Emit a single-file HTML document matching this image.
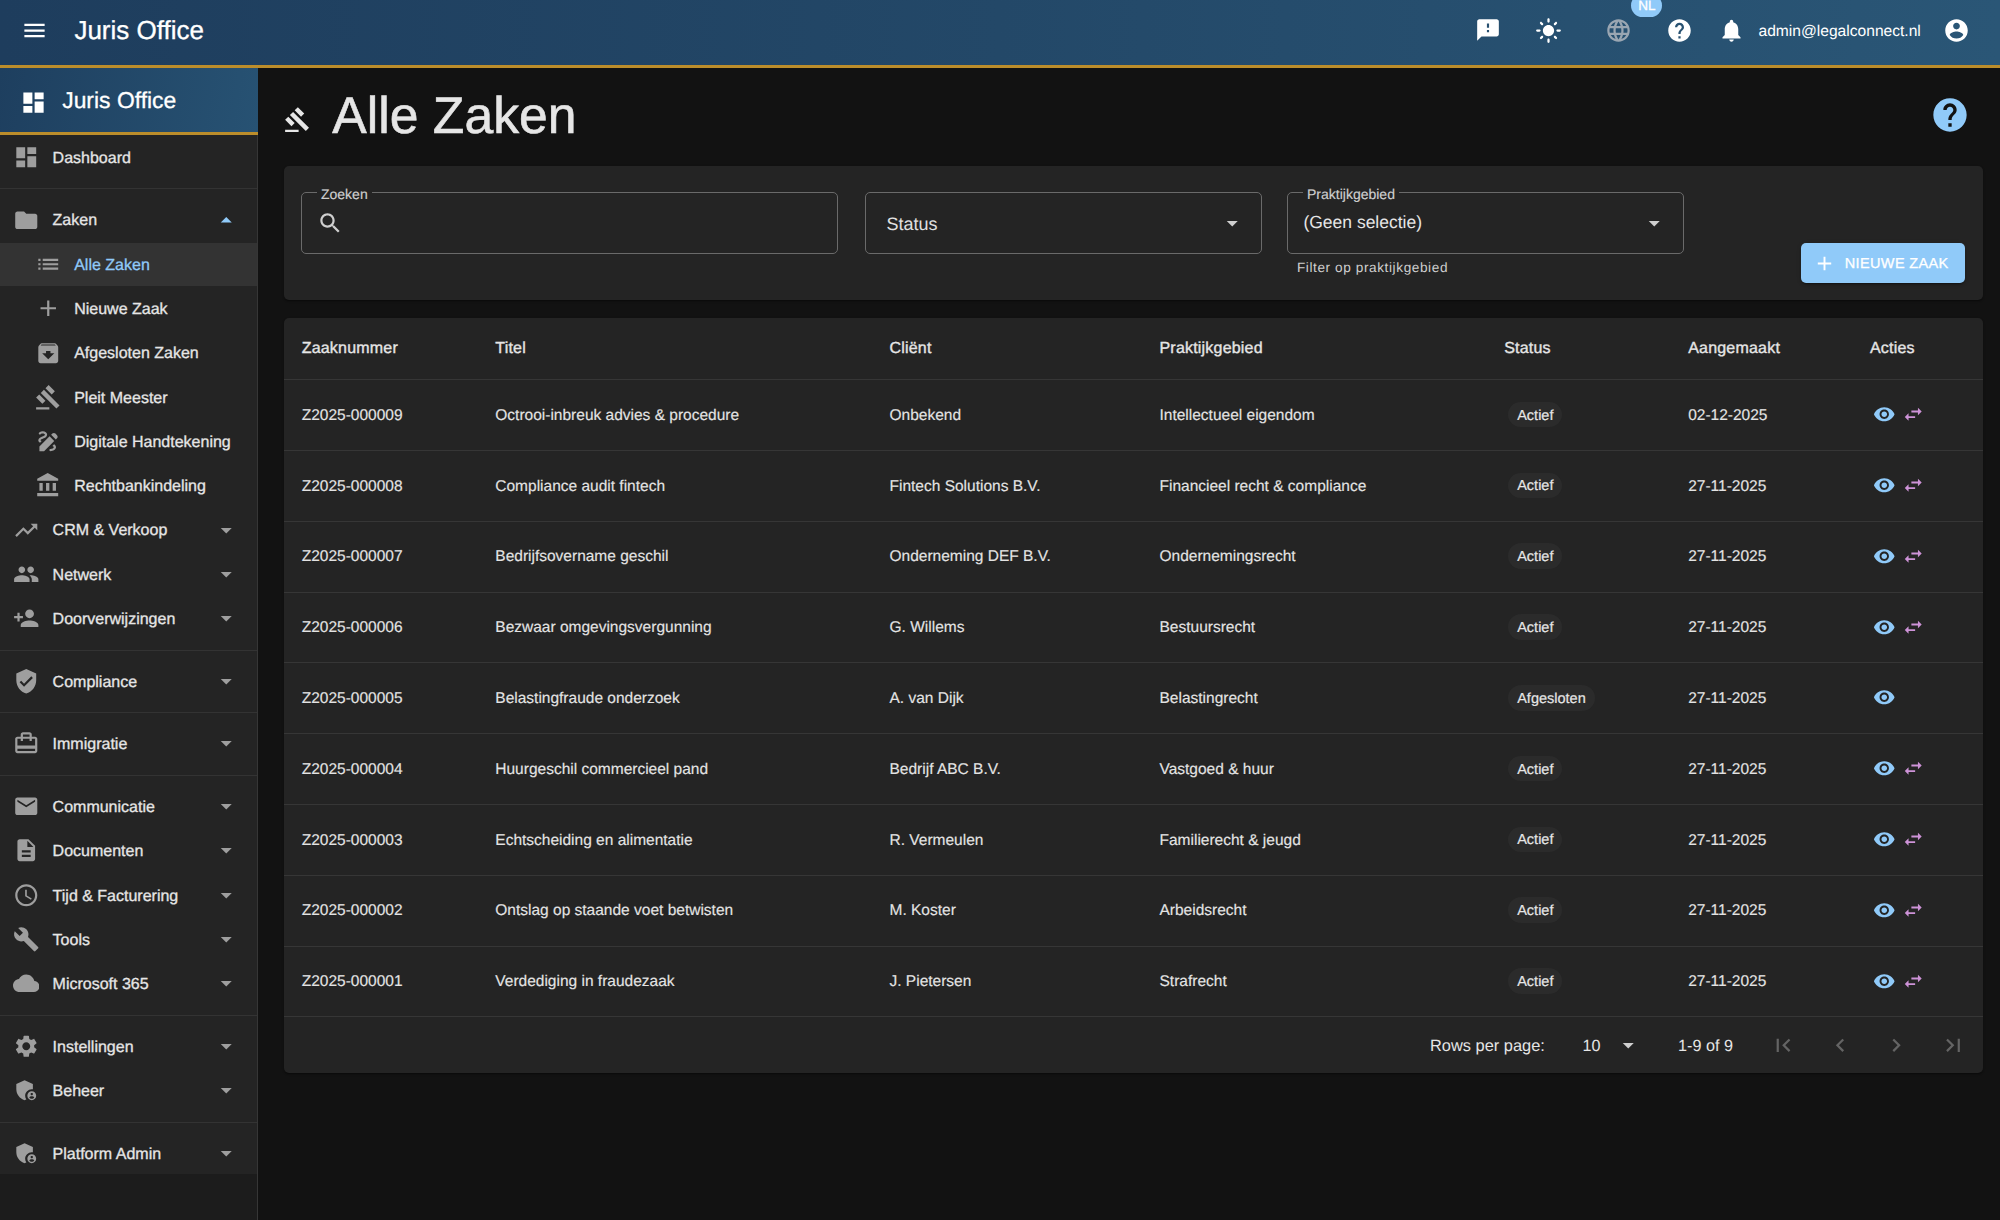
<!DOCTYPE html>
<html><head><meta charset="utf-8">
<style>
*{box-sizing:border-box;margin:0;padding:0}
html,body{width:2000px;height:1220px;overflow:hidden;background:#121212;font-family:"Liberation Sans",sans-serif;color:#e6e6e6;text-rendering:geometricPrecision}
.abs{position:absolute;display:block}
.t{position:absolute;white-space:nowrap;line-height:1.15}
#appbar{position:absolute;left:0;top:0;width:2000px;height:68px;background:linear-gradient(90deg,#1e3d5d 0%,#234868 50%,#2a5676 100%);border-bottom:3px solid #bb8d2b}
#drawer{position:absolute;left:0;top:68px;width:258px;height:1152px;background:#1c1c1c;border-right:1px solid #363636}
#navlist{position:absolute;left:0;top:135px;width:257px;height:1039px;background:#242424}
#dhead{position:absolute;left:0;top:68px;width:258px;height:67px;background:linear-gradient(100deg,#1e3f5f 0%,#275273 100%);border-bottom:3px solid #bb8d2b}
.sel{position:absolute;left:0;top:243px;width:257px;height:43px;background:#333333}
.div{position:absolute;left:0;width:257px;height:1px;background:#333}
.paper{position:absolute;background:#242424;border-radius:5px;box-shadow:0 2px 1px -1px rgba(0,0,0,.2),0 1px 1px 0 rgba(0,0,0,.14),0 1px 3px 0 rgba(0,0,0,.12)}
.fld{position:absolute;border:1px solid #6a6a6a;border-radius:5px}
.lbl{position:absolute;font-size:14px;color:#cfcfcf;background:#242424;padding:0 4px;line-height:14px;white-space:nowrap;-webkit-text-stroke:0.15px #cfcfcf}
.rdiv{position:absolute;left:284px;width:1699px;height:1px;background:#363636}
.chip{position:absolute;height:25.6px;border-radius:13px;background:#2d2d2d;font-size:14.5px;line-height:25.6px;color:#e6e6e6;padding:0 9px;white-space:nowrap}
</style></head>
<body>
<div id="appbar"></div>
<div id="drawer"></div>
<div id="navlist"></div>
<div id="dhead"></div>

<svg class="abs" style="left:20.6px;top:16.5px;width:27px;height:27px" viewBox="0 0 24 24"><path fill="#fff" d="M3 18h18v-2H3v2zm0-5h18v-2H3v2zm0-7v2h18V6H3z"/></svg>
<div class="t" style="left:74.4px;top:16.00px;font-size:26px;color:#fff;font-weight:normal;-webkit-text-stroke:0.3px #fff">Juris Office</div>
<svg class="abs" style="left:1474.5px;top:17px;width:26px;height:26px" viewBox="0 0 24 24"><path fill="#fff" d="M20 2H4c-1.1 0-1.99.9-1.99 2L2 22l4-4h14c1.1 0 2-.9 2-2V4c0-1.1-.9-2-2-2zm-7 12h-2v-2h2v2zm0-4h-2V6h2v4z"/></svg>
<svg class="abs" style="left:1534.5px;top:16.5px;width:27px;height:27px" viewBox="0 0 24 24"><path fill="#fff" d="M12 7c-2.76 0-5 2.24-5 5s2.24 5 5 5 5-2.24 5-5-2.24-5-5-5zM2 13h2c.55 0 1-.45 1-1s-.45-1-1-1H2c-.55 0-1 .45-1 1s.45 1 1 1zm18 0h2c.55 0 1-.45 1-1s-.45-1-1-1h-2c-.55 0-1 .45-1 1s.45 1 1 1zM11 2v2c0 .55.45 1 1 1s1-.45 1-1V2c0-.55-.45-1-1-1s-1 .45-1 1zm0 18v2c0 .55.45 1 1 1s1-.45 1-1v-2c0-.55-.45-1-1-1s-1 .45-1 1zM5.99 4.58c-.39-.39-1.03-.39-1.41 0-.39.39-.39 1.03 0 1.41l1.06 1.06c.39.39 1.03.39 1.410 0s.39-1.03 0-1.41L5.99 4.58zm12.37 12.37c-.39-.39-1.03-.39-1.41 0-.39.39-.39 1.03 0 1.41l1.06 1.06c.39.39 1.03.39 1.41 0 .39-.39.39-1.03 0-1.41l-1.06-1.06zm1.06-10.96c.39-.39.39-1.03 0-1.41-.39-.39-1.03-.39-1.41 0l-1.06 1.06c-.39.39-.39 1.03 0 1.41s1.03.39 1.41 0l1.06-1.06zM7.05 18.36c.39-.39.39-1.03 0-1.41-.39-.39-1.03-.39-1.41 0l-1.06 1.06c-.39.39-.39 1.03 0 1.41s1.03.39 1.41 0l1.06-1.06z"/></svg>
<svg class="abs" style="left:1605px;top:16.5px;width:27px;height:27px" viewBox="0 0 24 24"><path fill="#9aa6b2" d="M11.99 2C6.47 2 2 6.48 2 12s4.47 10 9.99 10C17.52 22 22 17.52 22 12S17.52 2 11.99 2zm6.93 6h-2.95c-.32-1.25-.78-2.45-1.380-3.56 1.84.63 3.37 1.91 4.33 3.56zM12 4.04c.83 1.2 1.48 2.53 1.91 3.96h-3.82c.43-1.43 1.08-2.76 1.91-3.96zM4.26 14C4.1 13.36 4 12.690 4 12s.1-1.36.26-2h3.38c-.08.66-.14 1.32-.14 2 0 .68.06 1.34.14 2H4.26zm.82 2h2.95c.32 1.25.78 2.45 1.38 3.56-1.84-.63-3.37-1.9-4.33-3.56zm2.95-8H5.08c.96-1.66 2.49-2.93 4.33-3.56C8.81 5.55 8.35 6.75 8.03 8zM12 19.96c-.83-1.2-1.48-2.53-1.91-3.96h3.82c-.43 1.43-1.08 2.76-1.91 3.96zM14.34 14H9.66c-.09-.66-.16-1.32-.16-2 0-.68.07-1.35.16-2h4.68c.09.65.16 1.32.16 2 0 .68-.07 1.34-.16 2zm.25 5.56c.6-1.11 1.06-2.31 1.38-3.56h2.95c-.96 1.65-2.49 2.93-4.33 3.56zM16.36 14c.08-.66.14-1.32.14-2 0-.68-.06-1.34-.14-2h3.38c.16.64.26 1.31.26 2s-.1 1.36-.26 2h-3.38z"/></svg>
<div class="abs" style="left:1631px;top:-6px;width:31px;height:23px;border-radius:12px;background:#90caf9"></div>
<div class="t" style="left:1638.3px;top:-2.00px;font-size:13.5px;color:#fff;font-weight:normal;-webkit-text-stroke:0.3px #fff">NL</div>
<svg class="abs" style="left:1665.5px;top:16.5px;width:27px;height:27px" viewBox="0 0 24 24"><path fill="#fff" d="M12 2C6.48 2 2 6.48 2 12s4.48 10 10 10 10-4.48 10-10S17.52 2 12 2zm1 17h-2v-2h2v2zm2.07-7.75l-.9.92C13.45 12.9 13 13.5 13 15h-2v-.5c0-1.1.45-2.1 1.17-2.83l1.24-1.26c.37-.36.59-.86.59-1.41 0-1.1-.9-2-2-2s-2 .9-2 2H8c0-2.21 1.79-4 4-4s4 1.79 4 4c0 .88-.36 1.68-.93 2.25z"/></svg>
<svg class="abs" style="left:1718px;top:16.5px;width:27px;height:27px" viewBox="0 0 24 24"><path fill="#fff" d="M12 22c1.1 0 2-.9 2-2h-4c0 1.1.89 2 2 2zm6-6v-5c0-3.07-1.64-5.64-4.5-6.32V4c0-.83-.67-1.5-1.5-1.5s-1.5.67-1.5 1.5v.68C7.63 5.36 6 7.92 6 11v5l-2 2v1h16v-1l-2-2z"/></svg>
<div class="t" style="left:1758.5px;top:23.00px;font-size:15.6px;color:#fff;font-weight:normal">admin@legalconnect.nl</div>
<svg class="abs" style="left:1942.5px;top:16.5px;width:27px;height:27px" viewBox="0 0 24 24"><path fill="#fff" d="M12 2C6.48 2 2 6.48 2 12s4.48 10 10 10 10-4.48 10-10S17.52 2 12 2zm0 3c1.66 0 3 1.34 3 3s-1.34 3-3 3-3-1.34-3-3 1.34-3 3-3zm0 14.2c-2.5 0-4.71-1.28-6-3.22.03-1.99 4-3.08 6-3.08 1.99 0 5.970 1.09 6 3.08-1.29 1.94-3.5 3.22-6 3.22z"/></svg>
<svg class="abs" style="left:20.4px;top:88.6px;width:27px;height:27px" viewBox="0 0 24 24"><path fill="#fff" d="M3 13h8V3H3v10zm0 8h8v-6H3v6zm10 0h8V11h-8v10zm0-18v6h8V3h-8z"/></svg>
<div class="t" style="left:62.2px;top:87.00px;font-size:22.9px;color:#fff;font-weight:normal;-webkit-text-stroke:0.3px #fff">Juris Office</div>
<div class="sel"></div>
<svg class="abs" style="left:12.8px;top:144.25px;width:26.5px;height:26.5px" viewBox="0 0 24 24"><path fill="#9e9e9e" d="M3 13h8V3H3v10zm0 8h8v-6H3v6zm10 0h8V11h-8v10zm0-18v6h8V3h-8z"/></svg>
<div class="t" style="left:52.6px;top:150.00px;font-size:16px;color:#e6e6e6;font-weight:normal;-webkit-text-stroke:0.3px #e6e6e6">Dashboard</div>
<svg class="abs" style="left:12.8px;top:206.55px;width:26.5px;height:26.5px" viewBox="0 0 24 24"><path fill="#9e9e9e" d="M10 4H4c-1.1 0-1.99.9-1.99 2L2 18c0 1.1.9 2 2 2h16c1.1 0 2-.9 2-2V8c0-1.1-.9-2-2-2h-8l-2-2z"/></svg>
<div class="t" style="left:52.6px;top:212.00px;font-size:16px;color:#e6e6e6;font-weight:normal;-webkit-text-stroke:0.3px #e6e6e6">Zaken</div>
<svg class="abs" style="left:213.3px;top:206.55px;width:26.5px;height:26.5px" viewBox="0 0 24 24"><path fill="#90caf9" d="M7 14l5-5 5 5z"/></svg>
<svg class="abs" style="left:34.5px;top:251.25px;width:26.5px;height:26.5px" viewBox="0 0 24 24"><path fill="#9e9e9e" d="M3 13h2v-2H3v2zm0 4h2v-2H3v2zm0-8h2V7H3v2zm4 4h14v-2H7v2zm0 4h14v-2H7v2zM7 7v2h14V7H7z"/></svg>
<div class="t" style="left:74.2px;top:257.00px;font-size:16px;color:#90caf9;font-weight:normal;-webkit-text-stroke:0.3px #90caf9">Alle Zaken</div>
<svg class="abs" style="left:34.5px;top:295.35px;width:26.5px;height:26.5px" viewBox="0 0 24 24"><path fill="#9e9e9e" d="M19 13h-6v6h-2v-6H5v-2h6V5h2v6h6v2z"/></svg>
<div class="t" style="left:74.2px;top:301.00px;font-size:16px;color:#e6e6e6;font-weight:normal;-webkit-text-stroke:0.3px #e6e6e6">Nieuwe Zaak</div>
<svg class="abs" style="left:34.5px;top:339.55px;width:26.5px;height:26.5px" viewBox="0 0 24 24"><path fill="#9e9e9e" d="M20.54 5.23l-1.39-1.68C18.88 3.21 18.47 3 18 3H6c-.47 0-.88.21-1.16.55L3.46 5.23C3.17 5.57 3 6.02 3 6.5V19c0 1.1.9 2 2 2h14c1.1 0 2-.9 2-2V6.5c0-.48-.17-.93-.46-1.27zM12 17.5L6.5 12H10v-2h4v2h3.5L12 17.5zM5.12 5l.81-1h12l.94 1H5.12z"/></svg>
<div class="t" style="left:74.2px;top:345.00px;font-size:16px;color:#e6e6e6;font-weight:normal;-webkit-text-stroke:0.3px #e6e6e6">Afgesloten Zaken</div>
<svg class="abs" style="left:34.5px;top:383.75px;width:26.5px;height:26.5px" viewBox="0 0 24 24"><path fill="#9e9e9e" d="M1 21h12v2H1zM5.245 8.07l2.83-2.827 14.14 14.142-2.828 2.828zM12.317 1l5.657 5.656-2.83 2.83-5.654-5.66zM3.825 9.485l5.657 5.657-2.828 2.828-5.657-5.657z"/></svg>
<div class="t" style="left:74.2px;top:390.00px;font-size:16px;color:#e6e6e6;font-weight:normal;-webkit-text-stroke:0.3px #e6e6e6">Pleit Meester</div>
<svg class="abs" style="left:34.5px;top:427.95px;width:26.5px;height:26.5px" viewBox="0 0 24 24"><path fill="#9e9e9e" d="M18.85 10.39l1.06-1.06c.78-.78.78-2.05 0-2.83L18.5 5.09c-.78-.78-2.05-.78-2.83 0l-1.06 1.06 4.24 4.24zm-5.66-2.83L4 16.76V21h4.24l9.19-9.19-4.24-4.25zM19 17.5c0 2.19-2.54 3.5-5 3.5-.55 0-1-.45-1-1s.45-1 1-1c1.54 0 3-.73 3-1.5 0-.47-.48-.87-1.23-1.2l1.48-1.48c1.060.63 1.75 1.47 1.75 2.68zM4.58 13.35C3.61 12.79 3 12.06 3 11c0-1.8 1.89-2.63 3.56-3.36C7.59 7.18 9 6.56 9 6c0-.41-.78-1-2-1-1.26 0-1.8.61-1.830.64-.35.41-.98.46-1.4.12-.41-.34-.49-.95-.15-1.38C3.73 4.24 4.76 3 7 3s4 1.32 4 3c0 1.87-1.93 2.72-3.64 3.47C6.42 9.88 5 10.5 5 11c0 .31.43.6 1.07.86l-1.49 1.49z"/></svg>
<div class="t" style="left:74.2px;top:434.00px;font-size:16px;color:#e6e6e6;font-weight:normal;-webkit-text-stroke:0.3px #e6e6e6">Digitale Handtekening</div>
<svg class="abs" style="left:34.5px;top:472.25px;width:26.5px;height:26.5px" viewBox="0 0 24 24"><path fill="#9e9e9e" d="M4 10v7h3v-7H4zm6 0v7h3v-7h-3zM2 22h19v-3H2v3zm14-12v7h3v-7h-3zm-4.5-9L2 6v2h19V6l-9.5-5z"/></svg>
<div class="t" style="left:74.2px;top:478.00px;font-size:16px;color:#e6e6e6;font-weight:normal;-webkit-text-stroke:0.3px #e6e6e6">Rechtbankindeling</div>
<svg class="abs" style="left:12.8px;top:516.75px;width:26.5px;height:26.5px" viewBox="0 0 24 24"><path fill="#9e9e9e" d="M16 6l2.29 2.29-4.88 4.88-4-4L2 16.59 3.41 18l6-6 4 4 6.3-6.29L22 12V6z"/></svg>
<div class="t" style="left:52.6px;top:522.00px;font-size:16px;color:#e6e6e6;font-weight:normal;-webkit-text-stroke:0.3px #e6e6e6">CRM &amp; Verkoop</div>
<svg class="abs" style="left:213.3px;top:516.75px;width:26.5px;height:26.5px" viewBox="0 0 24 24"><path fill="#9e9e9e" d="M7 10l5 5 5-5z"/></svg>
<svg class="abs" style="left:12.8px;top:560.95px;width:26.5px;height:26.5px" viewBox="0 0 24 24"><path fill="#9e9e9e" d="M16 11c1.66 0 2.99-1.34 2.99-3S17.66 5 16 5c-1.66 0-3 1.34-3 3s1.34 3 3 3zm-8 0c1.66 0 2.99-1.34 2.99-3S9.66 5 8 5C6.34 5 5 6.34 5 8s1.34 3 3 3zm0 2c-2.33 0-7 1.17-7 3.5V19h14v-2.5c0-2.33-4.67-3.5-7-3.5zm8 0c-.29 0-.62.02-.97.05 1.16.84 1.97 1.97 1.97 3.45V19h6v-2.5c0-2.33-4.67-3.5-7-3.5z"/></svg>
<div class="t" style="left:52.6px;top:567.00px;font-size:16px;color:#e6e6e6;font-weight:normal;-webkit-text-stroke:0.3px #e6e6e6">Netwerk</div>
<svg class="abs" style="left:213.3px;top:560.95px;width:26.5px;height:26.5px" viewBox="0 0 24 24"><path fill="#9e9e9e" d="M7 10l5 5 5-5z"/></svg>
<svg class="abs" style="left:12.8px;top:605.25px;width:26.5px;height:26.5px" viewBox="0 0 24 24"><path fill="#9e9e9e" d="M15 12c2.21 0 4-1.79 4-4s-1.79-4-4-4-4 1.79-4 4 1.79 4 4 4zm-9-2V7H4v3H1v2h3v3h2v-3h3v-2H6zm9 4c-2.67 0-8 1.34-8 4v2h16v-2c0-2.66-5.33-4-8-4z"/></svg>
<div class="t" style="left:52.6px;top:611.00px;font-size:16px;color:#e6e6e6;font-weight:normal;-webkit-text-stroke:0.3px #e6e6e6">Doorverwijzingen</div>
<svg class="abs" style="left:213.3px;top:605.25px;width:26.5px;height:26.5px" viewBox="0 0 24 24"><path fill="#9e9e9e" d="M7 10l5 5 5-5z"/></svg>
<svg class="abs" style="left:12.8px;top:668.05px;width:26.5px;height:26.5px" viewBox="0 0 24 24"><path fill="#9e9e9e" d="M12 1L3 5v6c0 5.55 3.84 10.74 9 12 5.16-1.26 9-6.45 9-12V5l-9-4zm-2 16l-4-4 1.41-1.41L10 14.17l6.59-6.59L18 9l-8 8z"/></svg>
<div class="t" style="left:52.6px;top:674.00px;font-size:16px;color:#e6e6e6;font-weight:normal;-webkit-text-stroke:0.3px #e6e6e6">Compliance</div>
<svg class="abs" style="left:213.3px;top:668.05px;width:26.5px;height:26.5px" viewBox="0 0 24 24"><path fill="#9e9e9e" d="M7 10l5 5 5-5z"/></svg>
<svg class="abs" style="left:12.8px;top:730.25px;width:26.5px;height:26.5px" viewBox="0 0 24 24"><path fill="#9e9e9e" d="M20 6h-3V4c0-1.11-.89-2-2-2H9c-1.11 0-2 .89-2 2v2H4c-1.11 0-2 .89-2 2v11c0 1.11.89 2 2 2h16c1.11 0 2-.89 2-2V8c0-1.11-.89-2-2-2zM9 4h6v2H9V4zm11 15H4v-2h16v2zm0-5H4V8h3v2h2V8h6v2h2V8h3v6z"/></svg>
<div class="t" style="left:52.6px;top:736.00px;font-size:16px;color:#e6e6e6;font-weight:normal;-webkit-text-stroke:0.3px #e6e6e6">Immigratie</div>
<svg class="abs" style="left:213.3px;top:730.25px;width:26.5px;height:26.5px" viewBox="0 0 24 24"><path fill="#9e9e9e" d="M7 10l5 5 5-5z"/></svg>
<svg class="abs" style="left:12.8px;top:793.05px;width:26.5px;height:26.5px" viewBox="0 0 24 24"><path fill="#9e9e9e" d="M20 4H4c-1.1 0-1.99.9-1.99 2L2 18c0 1.1.9 2 2 2h16c1.1 0 2-.9 2-2V6c0-1.1-.9-2-2-2zm0 4l-8 5-8-5V6l8 5 8-5v2z"/></svg>
<div class="t" style="left:52.6px;top:799.00px;font-size:16px;color:#e6e6e6;font-weight:normal;-webkit-text-stroke:0.3px #e6e6e6">Communicatie</div>
<svg class="abs" style="left:213.3px;top:793.05px;width:26.5px;height:26.5px" viewBox="0 0 24 24"><path fill="#9e9e9e" d="M7 10l5 5 5-5z"/></svg>
<svg class="abs" style="left:12.8px;top:837.25px;width:26.5px;height:26.5px" viewBox="0 0 24 24"><path fill="#9e9e9e" d="M14 2H6c-1.1 0-1.99.9-1.99 2L4 20c0 1.1.89 2 1.99 2H18c1.1 0 2-.9 2-2V8l-6-6zm2 16H8v-2h8v2zm0-4H8v-2h8v2zm-3-5V3.5L18.5 9H13z"/></svg>
<div class="t" style="left:52.6px;top:843.00px;font-size:16px;color:#e6e6e6;font-weight:normal;-webkit-text-stroke:0.3px #e6e6e6">Documenten</div>
<svg class="abs" style="left:213.3px;top:837.25px;width:26.5px;height:26.5px" viewBox="0 0 24 24"><path fill="#9e9e9e" d="M7 10l5 5 5-5z"/></svg>
<svg class="abs" style="left:12.8px;top:881.75px;width:26.5px;height:26.5px" viewBox="0 0 24 24"><path fill="#9e9e9e" d="M11.99 2C6.47 2 2 6.48 2 12s4.47 10 9.99 10C17.52 22 22 17.52 22 12S17.52 2 11.99 2zM12 20c-4.42 0-8-3.58-8-8s3.58-8 8-8 8 3.58 8 8-3.58 8-8 8zm.5-13H11v6l5.25 3.15.75-1.23-4.5-2.67z"/></svg>
<div class="t" style="left:52.6px;top:888.00px;font-size:16px;color:#e6e6e6;font-weight:normal;-webkit-text-stroke:0.3px #e6e6e6">Tijd &amp; Facturering</div>
<svg class="abs" style="left:213.3px;top:881.75px;width:26.5px;height:26.5px" viewBox="0 0 24 24"><path fill="#9e9e9e" d="M7 10l5 5 5-5z"/></svg>
<svg class="abs" style="left:12.8px;top:925.95px;width:26.5px;height:26.5px" viewBox="0 0 24 24"><path fill="#9e9e9e" d="M22.7 19l-9.1-9.1c.9-2.3.4-5-1.5-6.9-2-2-5-2.4-7.4-1.3L9 6 6 9 1.6 4.7C.4 7.1.9 10.1 2.9 12.1c1.9 1.9 4.6 2.4 6.9 1.5l9.1 9.1c.4.4 1 .4 1.4 0l2.3-2.3c.5-.4.5-1.1.1-1.4z"/></svg>
<div class="t" style="left:52.6px;top:932.00px;font-size:16px;color:#e6e6e6;font-weight:normal;-webkit-text-stroke:0.3px #e6e6e6">Tools</div>
<svg class="abs" style="left:213.3px;top:925.95px;width:26.5px;height:26.5px" viewBox="0 0 24 24"><path fill="#9e9e9e" d="M7 10l5 5 5-5z"/></svg>
<svg class="abs" style="left:12.8px;top:970.25px;width:26.5px;height:26.5px" viewBox="0 0 24 24"><path fill="#9e9e9e" d="M19.35 10.04C18.67 6.59 15.64 4 12 4 9.11 4 6.6 5.64 5.35 8.04 2.34 8.36 0 10.91 0 14c0 3.31 2.69 6 6 6h13c2.76 0 5-2.24 5-5 0-2.64-2.05-4.78-4.65-4.96z"/></svg>
<div class="t" style="left:52.6px;top:976.00px;font-size:16px;color:#e6e6e6;font-weight:normal;-webkit-text-stroke:0.3px #e6e6e6">Microsoft 365</div>
<svg class="abs" style="left:213.3px;top:970.25px;width:26.5px;height:26.5px" viewBox="0 0 24 24"><path fill="#9e9e9e" d="M7 10l5 5 5-5z"/></svg>
<svg class="abs" style="left:12.8px;top:1033.25px;width:26.5px;height:26.5px" viewBox="0 0 24 24"><path fill="#9e9e9e" d="M19.14 12.94c.04-.3.06-.61.06-.94 0-.32-.02-.64-.07-.94l2.03-1.58c.18-.14.23-.41.12-.61l-1.92-3.32c-.12-.22-.37-.29-.59-.22l-2.39.96c-.5-.38-1.03-.7-1.62-.94l-.36-2.54c-.04-.24-.24-.41-.48-.41h-3.84c-.24 0-.43.17-.47.41l-.36 2.54c-.59.24-1.13.57-1.62.94l-2.39-.96c-.22-.08-.47 0-.59.22L2.74 8.87c-.12.21-.08.47.12.61l2.03 1.58c-.05.3-.09.63-.09.94s.02.64.07.94l-2.03 1.58c-.18.14-.23.41-.12.61l1.92 3.32c.12.22.37.29.59.22l2.39-.96c.5.38 1.03.7 1.62.94l.36 2.54c.05.24.24.41.48.41h3.84c.24 0 .44-.17.47-.41l.36-2.54c.59-.24 1.13-.56 1.62-.94l2.39.96c.22.08.47 0 .59-.22l1.92-3.32c.12-.22.07-.47-.12-.61l-2.01-1.58zM12 15.6c-1.98 0-3.6-1.62-3.6-3.6s1.62-3.6 3.6-3.6 3.6 1.62 3.6 3.6-1.62 3.6-3.6 3.6z"/></svg>
<div class="t" style="left:52.6px;top:1039.00px;font-size:16px;color:#e6e6e6;font-weight:normal;-webkit-text-stroke:0.3px #e6e6e6">Instellingen</div>
<svg class="abs" style="left:213.3px;top:1033.25px;width:26.5px;height:26.5px" viewBox="0 0 24 24"><path fill="#9e9e9e" d="M7 10l5 5 5-5z"/></svg>
<svg class="abs" style="left:12.8px;top:1077.45px;width:26.5px;height:26.5px" viewBox="0 0 24 24"><path fill="#9e9e9e" d="M17 11c.34 0 .67.04 1 .09V6.27L10.5 3 3 6.27v4.91c0 4.54 3.2 8.79 7.5 9.82.55-.13 1.08-.32 1.6-.55-.69-.98-1.1-2.17-1.1-3.45 0-3.31 2.69-6 6-6zM17 13c-2.21 0-4 1.79-4 4s1.79 4 4 4 4-1.79 4-4-1.79-4-4-4zm0 1.38c.62 0 1.12.51 1.12 1.12s-.51 1.12-1.12 1.12-1.12-.51-1.12-1.12.5-1.12 1.12-1.12zm0 5.37c-.93 0-1.74-.46-2.24-1.17.05-.72 1.51-1.08 2.24-1.08s2.19.36 2.24 1.08c-.5.71-1.31 1.17-2.24 1.17z"/></svg>
<div class="t" style="left:52.6px;top:1083.00px;font-size:16px;color:#e6e6e6;font-weight:normal;-webkit-text-stroke:0.3px #e6e6e6">Beheer</div>
<svg class="abs" style="left:213.3px;top:1077.45px;width:26.5px;height:26.5px" viewBox="0 0 24 24"><path fill="#9e9e9e" d="M7 10l5 5 5-5z"/></svg>
<svg class="abs" style="left:12.8px;top:1140.25px;width:26.5px;height:26.5px" viewBox="0 0 24 24"><path fill="#9e9e9e" d="M17 11c.34 0 .67.04 1 .09V6.27L10.5 3 3 6.27v4.91c0 4.54 3.2 8.79 7.5 9.82.55-.13 1.08-.32 1.6-.55-.69-.98-1.1-2.17-1.1-3.45 0-3.31 2.69-6 6-6zM17 13c-2.21 0-4 1.79-4 4s1.79 4 4 4 4-1.79 4-4-1.79-4-4-4zm0 1.38c.62 0 1.12.51 1.12 1.12s-.51 1.12-1.12 1.12-1.12-.51-1.12-1.12.5-1.12 1.12-1.12zm0 5.37c-.93 0-1.74-.46-2.24-1.17.05-.72 1.51-1.08 2.24-1.08s2.19.36 2.24 1.08c-.5.71-1.31 1.17-2.24 1.17z"/></svg>
<div class="t" style="left:52.6px;top:1146.00px;font-size:16px;color:#e6e6e6;font-weight:normal;-webkit-text-stroke:0.3px #e6e6e6">Platform Admin</div>
<svg class="abs" style="left:213.3px;top:1140.25px;width:26.5px;height:26.5px" viewBox="0 0 24 24"><path fill="#9e9e9e" d="M7 10l5 5 5-5z"/></svg>
<div class="div" style="top:188.0px"></div>
<div class="div" style="top:649.8px"></div>
<div class="div" style="top:711.8px"></div>
<div class="div" style="top:774.5px"></div>
<div class="div" style="top:1015.4px"></div>
<div class="div" style="top:1122.0px"></div>
<svg class="abs" style="left:283.5px;top:105.5px;width:27px;height:27px" viewBox="0 0 24 24"><path fill="#e6e6e6" d="M1 21h12v2H1zM5.245 8.07l2.83-2.827 14.14 14.142-2.828 2.828zM12.317 1l5.657 5.656-2.83 2.83-5.654-5.66zM3.825 9.485l5.657 5.657-2.828 2.828-5.657-5.657z"/></svg>
<div class="t" style="left:332.3px;top:86.00px;font-size:51.7px;color:#e6e6e6;font-weight:normal;-webkit-text-stroke:0.6px #e6e6e6">Alle Zaken</div>
<div class="abs" style="left:1937px;top:102px;width:26px;height:26px;border-radius:13px;background:#121212"></div>
<svg class="abs" style="left:1930.2px;top:95.3px;width:40px;height:40px" viewBox="0 0 24 24"><path fill="#90caf9" d="M12 2C6.48 2 2 6.48 2 12s4.48 10 10 10 10-4.48 10-10S17.52 2 12 2zm1 17h-2v-2h2v2zm2.07-7.75l-.9.92C13.45 12.9 13 13.5 13 15h-2v-.5c0-1.1.45-2.1 1.17-2.83l1.24-1.26c.37-.36.59-.86.59-1.41 0-1.1-.9-2-2-2s-2 .9-2 2H8c0-2.21 1.79-4 4-4s4 1.79 4 4c0 .88-.36 1.68-.93 2.25z"/></svg>
<div class="paper" style="left:284px;top:166px;width:1699px;height:134px"></div>
<div class="fld" style="left:301px;top:192px;width:537px;height:62px"></div>
<div class="lbl" style="left:317px;top:186.5px">Zoeken</div>
<svg class="abs" style="left:316.5px;top:209.5px;width:26.5px;height:26.5px" viewBox="0 0 24 24"><path fill="#cfcfcf" d="M15.5 14h-.79l-.28-.27C15.41 12.59 16 11.11 16 9.5 16 5.91 13.09 3 9.5 3S3 5.91 3 9.5 5.91 16 9.5 16c1.61 0 3.09-.59 4.23-1.57l.27.28v.79l5 4.99L20.49 19l-4.99-5zm-6 0C7.01 14 5 11.99 5 9.5S7.01 5 9.5 5 14 7.01 14 9.5 11.99 14 9.5 14z"/></svg>
<div class="fld" style="left:865px;top:192px;width:397px;height:62px"></div>
<div class="t" style="left:886.4px;top:214.00px;font-size:18px;color:#e0e0e0;font-weight:normal">Status</div>
<svg class="abs" style="left:1218.7px;top:210px;width:26.5px;height:26.5px" viewBox="0 0 24 24"><path fill="#cfcfcf" d="M7 10l5 5 5-5z"/></svg>
<div class="fld" style="left:1287px;top:192px;width:397px;height:62px"></div>
<div class="lbl" style="left:1303px;top:186.5px">Praktijkgebied</div>
<div class="t" style="left:1303.4px;top:212.00px;font-size:17.5px;color:#e6e6e6;font-weight:normal">(Geen selectie)</div>
<svg class="abs" style="left:1640.7px;top:210px;width:26.5px;height:26.5px" viewBox="0 0 24 24"><path fill="#cfcfcf" d="M7 10l5 5 5-5z"/></svg>
<div class="t" style="left:1296.9px;top:260.00px;font-size:13.6px;color:#cfcfcf;font-weight:normal;letter-spacing:0.6px">Filter op praktijkgebied</div>
<div class="abs" style="left:1801px;top:243px;width:164px;height:40px;border-radius:5px;background:#90caf9;box-shadow:0 3px 1px -2px rgba(0,0,0,.2),0 2px 2px 0 rgba(0,0,0,.14),0 1px 5px 0 rgba(0,0,0,.12)"></div>
<svg class="abs" style="left:1813px;top:251.5px;width:23px;height:23px" viewBox="0 0 24 24"><path fill="#fff" d="M19 13h-6v6h-2v-6H5v-2h6V5h2v6h6v2z"/></svg>
<div class="t" style="left:1844.8px;top:256.00px;font-size:14.5px;color:#fff;font-weight:normal;letter-spacing:0.35px;-webkit-text-stroke:0.3px #fff">NIEUWE ZAAK</div>
<div class="paper" style="left:284px;top:318px;width:1699px;height:755px"></div>
<div class="t" style="left:301.7px;top:340.00px;font-size:16px;color:#e6e6e6;font-weight:normal;-webkit-text-stroke:0.35px #e6e6e6;letter-spacing:0.2px">Zaaknummer</div>
<div class="t" style="left:495.3px;top:340.00px;font-size:16px;color:#e6e6e6;font-weight:normal;-webkit-text-stroke:0.35px #e6e6e6;letter-spacing:0.2px">Titel</div>
<div class="t" style="left:889.5px;top:340.00px;font-size:16px;color:#e6e6e6;font-weight:normal;-webkit-text-stroke:0.35px #e6e6e6;letter-spacing:0.2px">Cli&euml;nt</div>
<div class="t" style="left:1159.5px;top:340.00px;font-size:16px;color:#e6e6e6;font-weight:normal;-webkit-text-stroke:0.35px #e6e6e6;letter-spacing:0.2px">Praktijkgebied</div>
<div class="t" style="left:1504.2px;top:340.00px;font-size:16px;color:#e6e6e6;font-weight:normal;-webkit-text-stroke:0.35px #e6e6e6;letter-spacing:0.2px">Status</div>
<div class="t" style="left:1688.2px;top:340.00px;font-size:16px;color:#e6e6e6;font-weight:normal;-webkit-text-stroke:0.35px #e6e6e6;letter-spacing:0.2px">Aangemaakt</div>
<div class="t" style="left:1870px;top:340.00px;font-size:16px;color:#e6e6e6;font-weight:normal;-webkit-text-stroke:0.35px #e6e6e6;letter-spacing:0.2px">Acties</div>
<div class="rdiv" style="top:379px"></div>
<div class="t" style="left:301.7px;top:407.00px;font-size:15.5px;color:#e3e3e3;font-weight:normal;-webkit-text-stroke:0.15px #e3e3e3">Z2025-000009</div>
<div class="t" style="left:495.3px;top:407.00px;font-size:15.5px;color:#e3e3e3;font-weight:normal;-webkit-text-stroke:0.15px #e3e3e3">Octrooi-inbreuk advies &amp; procedure</div>
<div class="t" style="left:889.5px;top:407.00px;font-size:15.5px;color:#e3e3e3;font-weight:normal;-webkit-text-stroke:0.15px #e3e3e3">Onbekend</div>
<div class="t" style="left:1159.5px;top:407.00px;font-size:15.5px;color:#e3e3e3;font-weight:normal;-webkit-text-stroke:0.15px #e3e3e3">Intellectueel eigendom</div>
<div class="abs" style="left:1508.4px;top:401.80px;width:53.6px;height:25.6px;border-radius:13px;background:#2b2b2b"></div>
<div class="t" style="left:1517.2px;top:408.00px;font-size:14.5px;color:#e6e6e6;font-weight:normal;-webkit-text-stroke:0.2px #e6e6e6">Actief</div>
<div class="t" style="left:1688.2px;top:407.00px;font-size:15.5px;color:#e3e3e3;font-weight:normal;-webkit-text-stroke:0.15px #e3e3e3">02-12-2025</div>
<svg class="abs" style="left:1873.2px;top:403.15px;width:22.5px;height:22.5px" viewBox="0 0 24 24"><path fill="#90caf9" d="M12 4.5C7 4.5 2.73 7.61 1 12c1.73 4.39 6 7.5 11 7.5s9.27-3.11 11-7.5c-1.73-4.39-6-7.5-11-7.5zM12 17c-2.76 0-5-2.24-5-5s2.24-5 5-5 5 2.24 5 5-2.24 5-5 5zm0-8c-1.66 0-3 1.34-3 3s1.34 3 3 3 3-1.34 3-3-1.34-3-3-3z"/></svg>
<svg class="abs" style="left:1901.8px;top:403.15px;width:22.5px;height:22.5px" viewBox="0 0 24 24"><path fill="#ce93d8" d="M6.99 11L3 15l3.99 4v-3H14v-2H6.99v-3zM21 9l-3.99-4v3H10v2h7.01v3L21 9z"/></svg>
<div class="rdiv" style="top:450px"></div>
<div class="t" style="left:301.7px;top:478.00px;font-size:15.5px;color:#e3e3e3;font-weight:normal;-webkit-text-stroke:0.15px #e3e3e3">Z2025-000008</div>
<div class="t" style="left:495.3px;top:478.00px;font-size:15.5px;color:#e3e3e3;font-weight:normal;-webkit-text-stroke:0.15px #e3e3e3">Compliance audit fintech</div>
<div class="t" style="left:889.5px;top:478.00px;font-size:15.5px;color:#e3e3e3;font-weight:normal;-webkit-text-stroke:0.15px #e3e3e3">Fintech Solutions B.V.</div>
<div class="t" style="left:1159.5px;top:478.00px;font-size:15.5px;color:#e3e3e3;font-weight:normal;-webkit-text-stroke:0.15px #e3e3e3">Financieel recht &amp; compliance</div>
<div class="abs" style="left:1508.4px;top:472.60px;width:53.6px;height:25.6px;border-radius:13px;background:#2b2b2b"></div>
<div class="t" style="left:1517.2px;top:478.00px;font-size:14.5px;color:#e6e6e6;font-weight:normal;-webkit-text-stroke:0.2px #e6e6e6">Actief</div>
<div class="t" style="left:1688.2px;top:478.00px;font-size:15.5px;color:#e3e3e3;font-weight:normal;-webkit-text-stroke:0.15px #e3e3e3">27-11-2025</div>
<svg class="abs" style="left:1873.2px;top:473.95px;width:22.5px;height:22.5px" viewBox="0 0 24 24"><path fill="#90caf9" d="M12 4.5C7 4.5 2.73 7.61 1 12c1.73 4.39 6 7.5 11 7.5s9.27-3.11 11-7.5c-1.73-4.39-6-7.5-11-7.5zM12 17c-2.76 0-5-2.24-5-5s2.24-5 5-5 5 2.24 5 5-2.24 5-5 5zm0-8c-1.66 0-3 1.34-3 3s1.34 3 3 3 3-1.34 3-3-1.34-3-3-3z"/></svg>
<svg class="abs" style="left:1901.8px;top:473.95px;width:22.5px;height:22.5px" viewBox="0 0 24 24"><path fill="#ce93d8" d="M6.99 11L3 15l3.99 4v-3H14v-2H6.99v-3zM21 9l-3.99-4v3H10v2h7.01v3L21 9z"/></svg>
<div class="rdiv" style="top:521px"></div>
<div class="t" style="left:301.7px;top:548.00px;font-size:15.5px;color:#e3e3e3;font-weight:normal;-webkit-text-stroke:0.15px #e3e3e3">Z2025-000007</div>
<div class="t" style="left:495.3px;top:548.00px;font-size:15.5px;color:#e3e3e3;font-weight:normal;-webkit-text-stroke:0.15px #e3e3e3">Bedrijfsovername geschil</div>
<div class="t" style="left:889.5px;top:548.00px;font-size:15.5px;color:#e3e3e3;font-weight:normal;-webkit-text-stroke:0.15px #e3e3e3">Onderneming DEF B.V.</div>
<div class="t" style="left:1159.5px;top:548.00px;font-size:15.5px;color:#e3e3e3;font-weight:normal;-webkit-text-stroke:0.15px #e3e3e3">Ondernemingsrecht</div>
<div class="abs" style="left:1508.4px;top:543.40px;width:53.6px;height:25.6px;border-radius:13px;background:#2b2b2b"></div>
<div class="t" style="left:1517.2px;top:549.00px;font-size:14.5px;color:#e6e6e6;font-weight:normal;-webkit-text-stroke:0.2px #e6e6e6">Actief</div>
<div class="t" style="left:1688.2px;top:548.00px;font-size:15.5px;color:#e3e3e3;font-weight:normal;-webkit-text-stroke:0.15px #e3e3e3">27-11-2025</div>
<svg class="abs" style="left:1873.2px;top:544.75px;width:22.5px;height:22.5px" viewBox="0 0 24 24"><path fill="#90caf9" d="M12 4.5C7 4.5 2.73 7.61 1 12c1.73 4.39 6 7.5 11 7.5s9.27-3.11 11-7.5c-1.73-4.39-6-7.5-11-7.5zM12 17c-2.76 0-5-2.24-5-5s2.24-5 5-5 5 2.24 5 5-2.24 5-5 5zm0-8c-1.66 0-3 1.34-3 3s1.34 3 3 3 3-1.34 3-3-1.34-3-3-3z"/></svg>
<svg class="abs" style="left:1901.8px;top:544.75px;width:22.5px;height:22.5px" viewBox="0 0 24 24"><path fill="#ce93d8" d="M6.99 11L3 15l3.99 4v-3H14v-2H6.99v-3zM21 9l-3.99-4v3H10v2h7.01v3L21 9z"/></svg>
<div class="rdiv" style="top:592px"></div>
<div class="t" style="left:301.7px;top:619.00px;font-size:15.5px;color:#e3e3e3;font-weight:normal;-webkit-text-stroke:0.15px #e3e3e3">Z2025-000006</div>
<div class="t" style="left:495.3px;top:619.00px;font-size:15.5px;color:#e3e3e3;font-weight:normal;-webkit-text-stroke:0.15px #e3e3e3">Bezwaar omgevingsvergunning</div>
<div class="t" style="left:889.5px;top:619.00px;font-size:15.5px;color:#e3e3e3;font-weight:normal;-webkit-text-stroke:0.15px #e3e3e3">G. Willems</div>
<div class="t" style="left:1159.5px;top:619.00px;font-size:15.5px;color:#e3e3e3;font-weight:normal;-webkit-text-stroke:0.15px #e3e3e3">Bestuursrecht</div>
<div class="abs" style="left:1508.4px;top:614.20px;width:53.6px;height:25.6px;border-radius:13px;background:#2b2b2b"></div>
<div class="t" style="left:1517.2px;top:620.00px;font-size:14.5px;color:#e6e6e6;font-weight:normal;-webkit-text-stroke:0.2px #e6e6e6">Actief</div>
<div class="t" style="left:1688.2px;top:619.00px;font-size:15.5px;color:#e3e3e3;font-weight:normal;-webkit-text-stroke:0.15px #e3e3e3">27-11-2025</div>
<svg class="abs" style="left:1873.2px;top:615.55px;width:22.5px;height:22.5px" viewBox="0 0 24 24"><path fill="#90caf9" d="M12 4.5C7 4.5 2.73 7.61 1 12c1.73 4.39 6 7.5 11 7.5s9.27-3.11 11-7.5c-1.73-4.39-6-7.5-11-7.5zM12 17c-2.76 0-5-2.24-5-5s2.24-5 5-5 5 2.24 5 5-2.24 5-5 5zm0-8c-1.66 0-3 1.34-3 3s1.34 3 3 3 3-1.34 3-3-1.34-3-3-3z"/></svg>
<svg class="abs" style="left:1901.8px;top:615.55px;width:22.5px;height:22.5px" viewBox="0 0 24 24"><path fill="#ce93d8" d="M6.99 11L3 15l3.99 4v-3H14v-2H6.99v-3zM21 9l-3.99-4v3H10v2h7.01v3L21 9z"/></svg>
<div class="rdiv" style="top:662px"></div>
<div class="t" style="left:301.7px;top:690.00px;font-size:15.5px;color:#e3e3e3;font-weight:normal;-webkit-text-stroke:0.15px #e3e3e3">Z2025-000005</div>
<div class="t" style="left:495.3px;top:690.00px;font-size:15.5px;color:#e3e3e3;font-weight:normal;-webkit-text-stroke:0.15px #e3e3e3">Belastingfraude onderzoek</div>
<div class="t" style="left:889.5px;top:690.00px;font-size:15.5px;color:#e3e3e3;font-weight:normal;-webkit-text-stroke:0.15px #e3e3e3">A. van Dijk</div>
<div class="t" style="left:1159.5px;top:690.00px;font-size:15.5px;color:#e3e3e3;font-weight:normal;-webkit-text-stroke:0.15px #e3e3e3">Belastingrecht</div>
<div class="abs" style="left:1508.4px;top:685.00px;width:86.5px;height:25.6px;border-radius:13px;background:#2b2b2b"></div>
<div class="t" style="left:1517.2px;top:691.00px;font-size:14.5px;color:#e6e6e6;font-weight:normal;-webkit-text-stroke:0.2px #e6e6e6">Afgesloten</div>
<div class="t" style="left:1688.2px;top:690.00px;font-size:15.5px;color:#e3e3e3;font-weight:normal;-webkit-text-stroke:0.15px #e3e3e3">27-11-2025</div>
<svg class="abs" style="left:1873.2px;top:686.3499999999999px;width:22.5px;height:22.5px" viewBox="0 0 24 24"><path fill="#90caf9" d="M12 4.5C7 4.5 2.73 7.61 1 12c1.73 4.39 6 7.5 11 7.5s9.27-3.11 11-7.5c-1.73-4.39-6-7.5-11-7.5zM12 17c-2.76 0-5-2.24-5-5s2.24-5 5-5 5 2.24 5 5-2.24 5-5 5zm0-8c-1.66 0-3 1.34-3 3s1.34 3 3 3 3-1.34 3-3-1.34-3-3-3z"/></svg>
<div class="rdiv" style="top:733px"></div>
<div class="t" style="left:301.7px;top:761.00px;font-size:15.5px;color:#e3e3e3;font-weight:normal;-webkit-text-stroke:0.15px #e3e3e3">Z2025-000004</div>
<div class="t" style="left:495.3px;top:761.00px;font-size:15.5px;color:#e3e3e3;font-weight:normal;-webkit-text-stroke:0.15px #e3e3e3">Huurgeschil commercieel pand</div>
<div class="t" style="left:889.5px;top:761.00px;font-size:15.5px;color:#e3e3e3;font-weight:normal;-webkit-text-stroke:0.15px #e3e3e3">Bedrijf ABC B.V.</div>
<div class="t" style="left:1159.5px;top:761.00px;font-size:15.5px;color:#e3e3e3;font-weight:normal;-webkit-text-stroke:0.15px #e3e3e3">Vastgoed &amp; huur</div>
<div class="abs" style="left:1508.4px;top:755.80px;width:53.6px;height:25.6px;border-radius:13px;background:#2b2b2b"></div>
<div class="t" style="left:1517.2px;top:762.00px;font-size:14.5px;color:#e6e6e6;font-weight:normal;-webkit-text-stroke:0.2px #e6e6e6">Actief</div>
<div class="t" style="left:1688.2px;top:761.00px;font-size:15.5px;color:#e3e3e3;font-weight:normal;-webkit-text-stroke:0.15px #e3e3e3">27-11-2025</div>
<svg class="abs" style="left:1873.2px;top:757.15px;width:22.5px;height:22.5px" viewBox="0 0 24 24"><path fill="#90caf9" d="M12 4.5C7 4.5 2.73 7.61 1 12c1.73 4.39 6 7.5 11 7.5s9.27-3.11 11-7.5c-1.73-4.39-6-7.5-11-7.5zM12 17c-2.76 0-5-2.24-5-5s2.24-5 5-5 5 2.24 5 5-2.24 5-5 5zm0-8c-1.66 0-3 1.34-3 3s1.34 3 3 3 3-1.34 3-3-1.34-3-3-3z"/></svg>
<svg class="abs" style="left:1901.8px;top:757.15px;width:22.5px;height:22.5px" viewBox="0 0 24 24"><path fill="#ce93d8" d="M6.99 11L3 15l3.99 4v-3H14v-2H6.99v-3zM21 9l-3.99-4v3H10v2h7.01v3L21 9z"/></svg>
<div class="rdiv" style="top:804px"></div>
<div class="t" style="left:301.7px;top:832.00px;font-size:15.5px;color:#e3e3e3;font-weight:normal;-webkit-text-stroke:0.15px #e3e3e3">Z2025-000003</div>
<div class="t" style="left:495.3px;top:832.00px;font-size:15.5px;color:#e3e3e3;font-weight:normal;-webkit-text-stroke:0.15px #e3e3e3">Echtscheiding en alimentatie</div>
<div class="t" style="left:889.5px;top:832.00px;font-size:15.5px;color:#e3e3e3;font-weight:normal;-webkit-text-stroke:0.15px #e3e3e3">R. Vermeulen</div>
<div class="t" style="left:1159.5px;top:832.00px;font-size:15.5px;color:#e3e3e3;font-weight:normal;-webkit-text-stroke:0.15px #e3e3e3">Familierecht &amp; jeugd</div>
<div class="abs" style="left:1508.4px;top:826.60px;width:53.6px;height:25.6px;border-radius:13px;background:#2b2b2b"></div>
<div class="t" style="left:1517.2px;top:832.00px;font-size:14.5px;color:#e6e6e6;font-weight:normal;-webkit-text-stroke:0.2px #e6e6e6">Actief</div>
<div class="t" style="left:1688.2px;top:832.00px;font-size:15.5px;color:#e3e3e3;font-weight:normal;-webkit-text-stroke:0.15px #e3e3e3">27-11-2025</div>
<svg class="abs" style="left:1873.2px;top:827.9499999999999px;width:22.5px;height:22.5px" viewBox="0 0 24 24"><path fill="#90caf9" d="M12 4.5C7 4.5 2.73 7.61 1 12c1.73 4.39 6 7.5 11 7.5s9.27-3.11 11-7.5c-1.73-4.39-6-7.5-11-7.5zM12 17c-2.76 0-5-2.24-5-5s2.24-5 5-5 5 2.24 5 5-2.24 5-5 5zm0-8c-1.66 0-3 1.34-3 3s1.34 3 3 3 3-1.34 3-3-1.34-3-3-3z"/></svg>
<svg class="abs" style="left:1901.8px;top:827.9499999999999px;width:22.5px;height:22.5px" viewBox="0 0 24 24"><path fill="#ce93d8" d="M6.99 11L3 15l3.99 4v-3H14v-2H6.99v-3zM21 9l-3.99-4v3H10v2h7.01v3L21 9z"/></svg>
<div class="rdiv" style="top:875px"></div>
<div class="t" style="left:301.7px;top:902.00px;font-size:15.5px;color:#e3e3e3;font-weight:normal;-webkit-text-stroke:0.15px #e3e3e3">Z2025-000002</div>
<div class="t" style="left:495.3px;top:902.00px;font-size:15.5px;color:#e3e3e3;font-weight:normal;-webkit-text-stroke:0.15px #e3e3e3">Ontslag op staande voet betwisten</div>
<div class="t" style="left:889.5px;top:902.00px;font-size:15.5px;color:#e3e3e3;font-weight:normal;-webkit-text-stroke:0.15px #e3e3e3">M. Koster</div>
<div class="t" style="left:1159.5px;top:902.00px;font-size:15.5px;color:#e3e3e3;font-weight:normal;-webkit-text-stroke:0.15px #e3e3e3">Arbeidsrecht</div>
<div class="abs" style="left:1508.4px;top:897.40px;width:53.6px;height:25.6px;border-radius:13px;background:#2b2b2b"></div>
<div class="t" style="left:1517.2px;top:903.00px;font-size:14.5px;color:#e6e6e6;font-weight:normal;-webkit-text-stroke:0.2px #e6e6e6">Actief</div>
<div class="t" style="left:1688.2px;top:902.00px;font-size:15.5px;color:#e3e3e3;font-weight:normal;-webkit-text-stroke:0.15px #e3e3e3">27-11-2025</div>
<svg class="abs" style="left:1873.2px;top:898.75px;width:22.5px;height:22.5px" viewBox="0 0 24 24"><path fill="#90caf9" d="M12 4.5C7 4.5 2.73 7.61 1 12c1.73 4.39 6 7.5 11 7.5s9.27-3.11 11-7.5c-1.73-4.39-6-7.5-11-7.5zM12 17c-2.76 0-5-2.24-5-5s2.24-5 5-5 5 2.24 5 5-2.24 5-5 5zm0-8c-1.66 0-3 1.34-3 3s1.34 3 3 3 3-1.34 3-3-1.34-3-3-3z"/></svg>
<svg class="abs" style="left:1901.8px;top:898.75px;width:22.5px;height:22.5px" viewBox="0 0 24 24"><path fill="#ce93d8" d="M6.99 11L3 15l3.99 4v-3H14v-2H6.99v-3zM21 9l-3.99-4v3H10v2h7.01v3L21 9z"/></svg>
<div class="rdiv" style="top:946px"></div>
<div class="t" style="left:301.7px;top:973.00px;font-size:15.5px;color:#e3e3e3;font-weight:normal;-webkit-text-stroke:0.15px #e3e3e3">Z2025-000001</div>
<div class="t" style="left:495.3px;top:973.00px;font-size:15.5px;color:#e3e3e3;font-weight:normal;-webkit-text-stroke:0.15px #e3e3e3">Verdediging in fraudezaak</div>
<div class="t" style="left:889.5px;top:973.00px;font-size:15.5px;color:#e3e3e3;font-weight:normal;-webkit-text-stroke:0.15px #e3e3e3">J. Pietersen</div>
<div class="t" style="left:1159.5px;top:973.00px;font-size:15.5px;color:#e3e3e3;font-weight:normal;-webkit-text-stroke:0.15px #e3e3e3">Strafrecht</div>
<div class="abs" style="left:1508.4px;top:968.20px;width:53.6px;height:25.6px;border-radius:13px;background:#2b2b2b"></div>
<div class="t" style="left:1517.2px;top:974.00px;font-size:14.5px;color:#e6e6e6;font-weight:normal;-webkit-text-stroke:0.2px #e6e6e6">Actief</div>
<div class="t" style="left:1688.2px;top:973.00px;font-size:15.5px;color:#e3e3e3;font-weight:normal;-webkit-text-stroke:0.15px #e3e3e3">27-11-2025</div>
<svg class="abs" style="left:1873.2px;top:969.55px;width:22.5px;height:22.5px" viewBox="0 0 24 24"><path fill="#90caf9" d="M12 4.5C7 4.5 2.73 7.61 1 12c1.73 4.39 6 7.5 11 7.5s9.27-3.11 11-7.5c-1.73-4.39-6-7.5-11-7.5zM12 17c-2.76 0-5-2.24-5-5s2.24-5 5-5 5 2.24 5 5-2.24 5-5 5zm0-8c-1.66 0-3 1.34-3 3s1.34 3 3 3 3-1.34 3-3-1.34-3-3-3z"/></svg>
<svg class="abs" style="left:1901.8px;top:969.55px;width:22.5px;height:22.5px" viewBox="0 0 24 24"><path fill="#ce93d8" d="M6.99 11L3 15l3.99 4v-3H14v-2H6.99v-3zM21 9l-3.99-4v3H10v2h7.01v3L21 9z"/></svg>
<div class="rdiv" style="top:1016px"></div>
<div class="t" style="left:1430px;top:1037.00px;font-size:16.4px;color:#e6e6e6;font-weight:normal">Rows per page:</div>
<div class="t" style="left:1582.5px;top:1037.00px;font-size:16.2px;color:#e6e6e6;font-weight:normal">10</div>
<svg class="abs" style="left:1615.3px;top:1032.05px;width:26.5px;height:26.5px" viewBox="0 0 24 24"><path fill="#cfcfcf" d="M7 10l5 5 5-5z"/></svg>
<div class="t" style="left:1678px;top:1037.00px;font-size:16.2px;color:#e6e6e6;font-weight:normal">1-9 of 9</div>
<svg class="abs" style="left:1770.1000000000001px;top:1032.05px;width:26.5px;height:26.5px" viewBox="0 0 24 24"><path fill="#646464" d="M18.41 16.59L13.82 12l4.59-4.59L17 6l-6 6 6 6zM6 6h2v12H6z"/></svg>
<svg class="abs" style="left:1827.2px;top:1032.05px;width:26.5px;height:26.5px" viewBox="0 0 24 24"><path fill="#646464" d="M15.41 7.41L14 6l-6 6 6 6 1.41-1.41L10.83 12z"/></svg>
<svg class="abs" style="left:1883.1509999999998px;top:1032.05px;width:26.5px;height:26.5px" viewBox="0 0 24 24"><path fill="#646464" d="M10 6L8.59 7.41 13.17 12l-4.58 4.59L10 18l6-6z"/></svg>
<svg class="abs" style="left:1940.0510000000002px;top:1032.05px;width:26.5px;height:26.5px" viewBox="0 0 24 24"><path fill="#646464" d="M5.59 7.41L10.18 12l-4.59 4.59L7 18l6-6-6-6zM16 6h2v12h-2z"/></svg>
</body></html>
